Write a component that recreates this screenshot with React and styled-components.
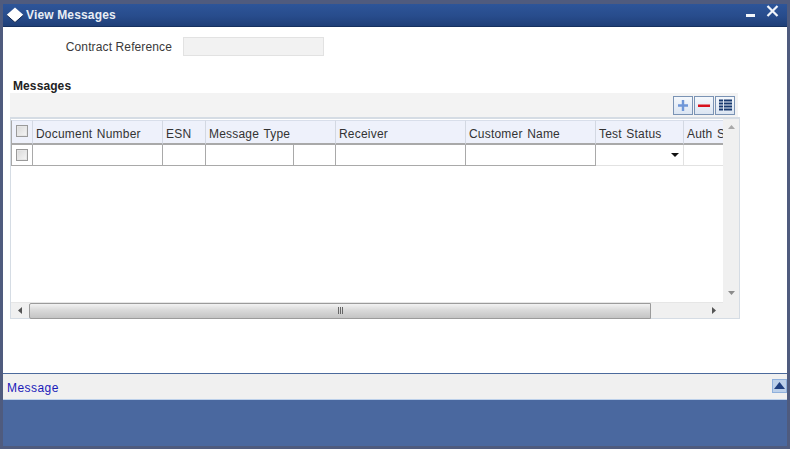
import React from "react";
import styled, { createGlobalStyle } from "styled-components";

const GlobalStyle = createGlobalStyle`
  html, body {
    margin: 0;
    padding: 0;
    background: #4f5b7e;
  }
  * {
    box-sizing: border-box;
  }
`;

const Frame = styled.div`
  width: 790px;
  height: 449px;
  padding: 4px 3px 3px 3px;
  background: #4f5b7e;
  display: flex;
  flex-direction: column;
  font-family: "Liberation Sans", Arial, sans-serif;
  font-size: 12px;
  color: #333;
  overflow: hidden;
`;

const TitleBar = styled.div`
  height: 23px;
  flex: none;
  background: linear-gradient(to bottom, #2d5599, #284c8c 55%, #1f3f78);
  border-bottom: 1px solid #16305f;
  display: flex;
  align-items: center;
  padding: 0 0 0 3px;
  color: #fff;
`;

const Title = styled.div`
  font-size: 12px;
  font-weight: 700;
  margin-left: 2px;
  letter-spacing: 0.15px;
  color: #e8edf5;
`;

const WindowButtons = styled.div`
  margin-left: auto;
  margin-right: 8px;
  display: flex;
  gap: 10px;
  align-items: flex-start;
  height: 100%;
`;

const Body = styled.div`
  flex: 1;
  background: #fff;
  display: flex;
  flex-direction: column;
  min-height: 0;
`;

const FieldRow = styled.div`
  height: 38px;
  flex: none;
  padding-top: 10px;
  display: flex;
  align-items: flex-start;
`;

const FieldLabel = styled.label`
  width: 169px;
  height: 19px;
  line-height: 21px;
  text-align: right;
  letter-spacing: 0.12px;
  color: #3a3a3a;
`;

const FieldInput = styled.div`
  width: 141px;
  height: 19px;
  margin-left: 11px;
  background: #f2f2f2;
  border: 1px solid #e2e2e2;
`;

const SectionTitle = styled.div`
  height: 28px;
  padding: 14px 0 0 10px;
  line-height: 15px;
  font-weight: 700;
  letter-spacing: 0.1px;
  color: #222;
  flex: none;
`;

const TableBlock = styled.div`
  width: 730px;
  margin-left: 7px;
  flex: none;
`;

const Toolbar = styled.div`
  height: 24px;
  width: 728px;
  background: #f3f3f3;
  display: flex;
  justify-content: flex-end;
  align-items: flex-start;
  gap: 1px;
  padding: 3px 3px 0 0;
`;

const ToolButton = styled.button`
  width: 20px;
  height: 19px;
  padding: 0;
  border: 1px solid #7a93b4;
  background: linear-gradient(to bottom, #f5f8fc, #dbe5f2);
  display: flex;
  align-items: center;
  justify-content: center;
`;

const Grid = styled.div`
  height: 202px;
  border: 1px solid #d5dce4;
  border-top-width: 2px;
  display: grid;
  grid-template-columns: 712px 16px;
  grid-template-rows: 183px 16px;
`;

const Viewport = styled.div`
  overflow: hidden;
  padding-top: 1px;
`;

const TableRow = styled.div`
  display: flex;
  width: 760px;
`;

const HeadCell = styled.div`
  width: ${(p) => p.$w}px;
  height: 25px;
  flex: none;
  background: #eef1fb;
  border-top: 1px solid #d8deea;
  border-right: 1px solid #d3d8e2;
  border-bottom: 2px solid #a9a9a9;
  padding: 3px 0 0 3px;
  white-space: nowrap;
  letter-spacing: 0.2px;
  word-spacing: 1px;
  color: #333;
  display: flex;
  align-items: center;
`;

const Cell = styled.div`
  width: ${(p) => p.$w}px;
  height: 21px;
  flex: none;
  background: #fff;
  border-right: 1px solid ${(p) => (p.$soft ? "#e2e2e2" : "#a9a9a9")};
  border-bottom: 1px solid ${(p) => (p.$soft ? "#e2e2e2" : "#a9a9a9")};
  display: flex;
  align-items: center;
  justify-content: ${(p) => (p.$end ? "flex-end" : "center")};
  padding-right: ${(p) => (p.$end ? "4px" : "0")};
`;

const Check = styled.span`
  width: 12px;
  height: 12px;
  display: block;
  border: 1px solid #9a9a9a;
  outline: 1px solid #e6e6e6;
  outline-offset: -2px;
  background: linear-gradient(135deg, #d8d8d8, #f6f6f6);
`;

const CheckHead = styled(HeadCell)`
  padding: 0 0 3px 4px;
  border-left: 1px solid #a9a9a9;
`;

const CheckCell = styled(Cell)`
  border-left: 1px solid #a9a9a9;
`;

const Caret = styled.span`
  width: 0;
  height: 0;
  border-left: 4px solid transparent;
  border-right: 4px solid transparent;
  border-top: 4px solid #111;
`;

const VScroll = styled.div`
  background: #f0f0f0;
  display: flex;
  flex-direction: column;
  justify-content: space-between;
  align-items: center;
  padding: 6px 0 7px;
`;

const HScroll = styled.div`
  background: #f0f0f0;
  display: flex;
  align-items: center;
  border-top: 1px solid #e6e6e6;
`;

const ArrowBox = styled.div`
  width: 18px;
  height: 100%;
  flex: none;
  display: flex;
  align-items: center;
  justify-content: center;
`;

const Thumb = styled.div`
  width: 622px;
  height: 16px;
  flex: none;
  border: 1px solid #9b9b9b;
  border-radius: 2px 0 0 2px;
  background: linear-gradient(to bottom, #f2f2f2, #d9d9d9 45%, #c4c4c4);
  display: flex;
  align-items: center;
  justify-content: center;
`;

const Grip = styled.div`
  display: flex;
  gap: 1px;
  span {
    width: 1px;
    height: 7px;
    background: #666;
  }
`;

const Corner = styled.div`
  background: #f0f0f0;
`;

const Spacer = styled.div`
  flex: 1;
`;

const MessageBar = styled.div`
  height: 27px;
  flex: none;
  border-top: 1px solid #4b6a9c;
  border-bottom: 1px solid #bcd0ea;
  background: #f0f0f0;
  display: flex;
  align-items: center;
  justify-content: space-between;
  padding-left: 4px;
`;

const MessageLink = styled.a`
  color: #1a1ab8;
  font-size: 12px;
  letter-spacing: 0.45px;
  padding-top: 2px;
`;

const ExpandButton = styled.div`
  width: 15px;
  height: 14px;
  margin-bottom: 2px;
  background: #bcd0ea;
  border: 1px solid #8fb0dc;
  display: flex;
  align-items: center;
  justify-content: center;
`;

const FooterBand = styled.div`
  height: 46px;
  flex: none;
  background: #4a689f;
`;

const columns = [
  { name: "Document Number", w: 130 },
  { name: "ESN", w: 43 },
  { name: "Message Type", w: 130 },
  { name: "Receiver", w: 130 },
  { name: "Customer Name", w: 130 },
  { name: "Test Status", w: 88 },
  { name: "Auth Status", w: 80 },
];

function App() {
  return (
    <Frame>
      <GlobalStyle />
      <TitleBar>
        <svg width="18" height="17" viewBox="0 0 18 17">
          <polygon points="9,0.5 17.5,8 9,15.5 0.5,8" fill="#fff" />
          <polyline points="17.5,8 9,15.5 0.5,8" fill="none" stroke="#12264e" strokeWidth="1" />
        </svg>
        <Title>View Messages</Title>
        <WindowButtons>
          <svg width="11" height="20" viewBox="0 0 11 20">
            <rect x="1" y="10" width="9" height="3" fill="#f2f5fa" />
          </svg>
          <svg width="13" height="16" viewBox="0 0 13 16">
            <path d="M1.5 2 L11.5 12 M11.5 2 L1.5 12" stroke="#f2f5fa" strokeWidth="2.2" />
          </svg>
        </WindowButtons>
      </TitleBar>
      <Body>
        <FieldRow>
          <FieldLabel>Contract Reference</FieldLabel>
          <FieldInput />
        </FieldRow>
        <SectionTitle>Messages</SectionTitle>
        <TableBlock>
          <Toolbar>
            <ToolButton aria-label="Add">
              <svg width="14" height="13" viewBox="0 0 14 13">
                <path d="M7 1 V12 M2 6.5 H12" stroke="#6f97d8" strokeWidth="2.4" />
              </svg>
            </ToolButton>
            <ToolButton aria-label="Remove">
              <svg width="14" height="13" viewBox="0 0 14 13">
                <rect x="1" y="5.5" width="12" height="2.5" fill="#d8121c" />
              </svg>
            </ToolButton>
            <ToolButton aria-label="Details">
              <svg width="15" height="13" viewBox="0 0 15 13">
                <path
                  d="M1 1.5 H14 M1 4.5 H14 M1 7.5 H14 M1 10.5 H14"
                  stroke="#17396f"
                  strokeWidth="2"
                />
                <path d="M5.5 0 V12" stroke="#dbe5f2" strokeWidth="1" />
              </svg>
            </ToolButton>
          </Toolbar>
          <Grid>
            <Viewport>
              <TableRow>
                <CheckHead $w={22}>
                  <Check />
                </CheckHead>
                {columns.map((c) => (
                  <HeadCell key={c.name} $w={c.w}>
                    {c.name}
                  </HeadCell>
                ))}
              </TableRow>
              <TableRow>
                <CheckCell $w={22}>
                  <Check />
                </CheckCell>
                <Cell $w={130} />
                <Cell $w={43} />
                <Cell $w={88} />
                <Cell $w={42} />
                <Cell $w={130} />
                <Cell $w={130} />
                <Cell $w={88} $soft $end>
                  <Caret />
                </Cell>
                <Cell $w={80} $soft />
              </TableRow>
            </Viewport>
            <VScroll>
              <svg width="7" height="4" viewBox="0 0 7 4">
                <polygon points="3.5,0 7,4 0,4" fill="#a8a8a8" />
              </svg>
              <svg width="7" height="4" viewBox="0 0 7 4">
                <polygon points="0,0 7,0 3.5,4" fill="#8c8c8c" />
              </svg>
            </VScroll>
            <HScroll>
              <ArrowBox>
                <svg width="4" height="7" viewBox="0 0 4 7">
                  <polygon points="4,0 4,7 0,3.5" fill="#555" />
                </svg>
              </ArrowBox>
              <Thumb>
                <Grip>
                  <span />
                  <span />
                  <span />
                </Grip>
              </Thumb>
              <Spacer />
              <ArrowBox>
                <svg width="4" height="7" viewBox="0 0 4 7">
                  <polygon points="0,0 0,7 4,3.5" fill="#555" />
                </svg>
              </ArrowBox>
            </HScroll>
            <Corner />
          </Grid>
        </TableBlock>
        <Spacer />
        <MessageBar>
          <MessageLink>Message</MessageLink>
          <ExpandButton>
            <svg width="11" height="7" viewBox="0 0 11 7">
              <polygon points="5.5,0 11,7 0,7" fill="#1f3f80" />
            </svg>
          </ExpandButton>
        </MessageBar>
        <FooterBand />
      </Body>
    </Frame>
  );
}

export default App;
